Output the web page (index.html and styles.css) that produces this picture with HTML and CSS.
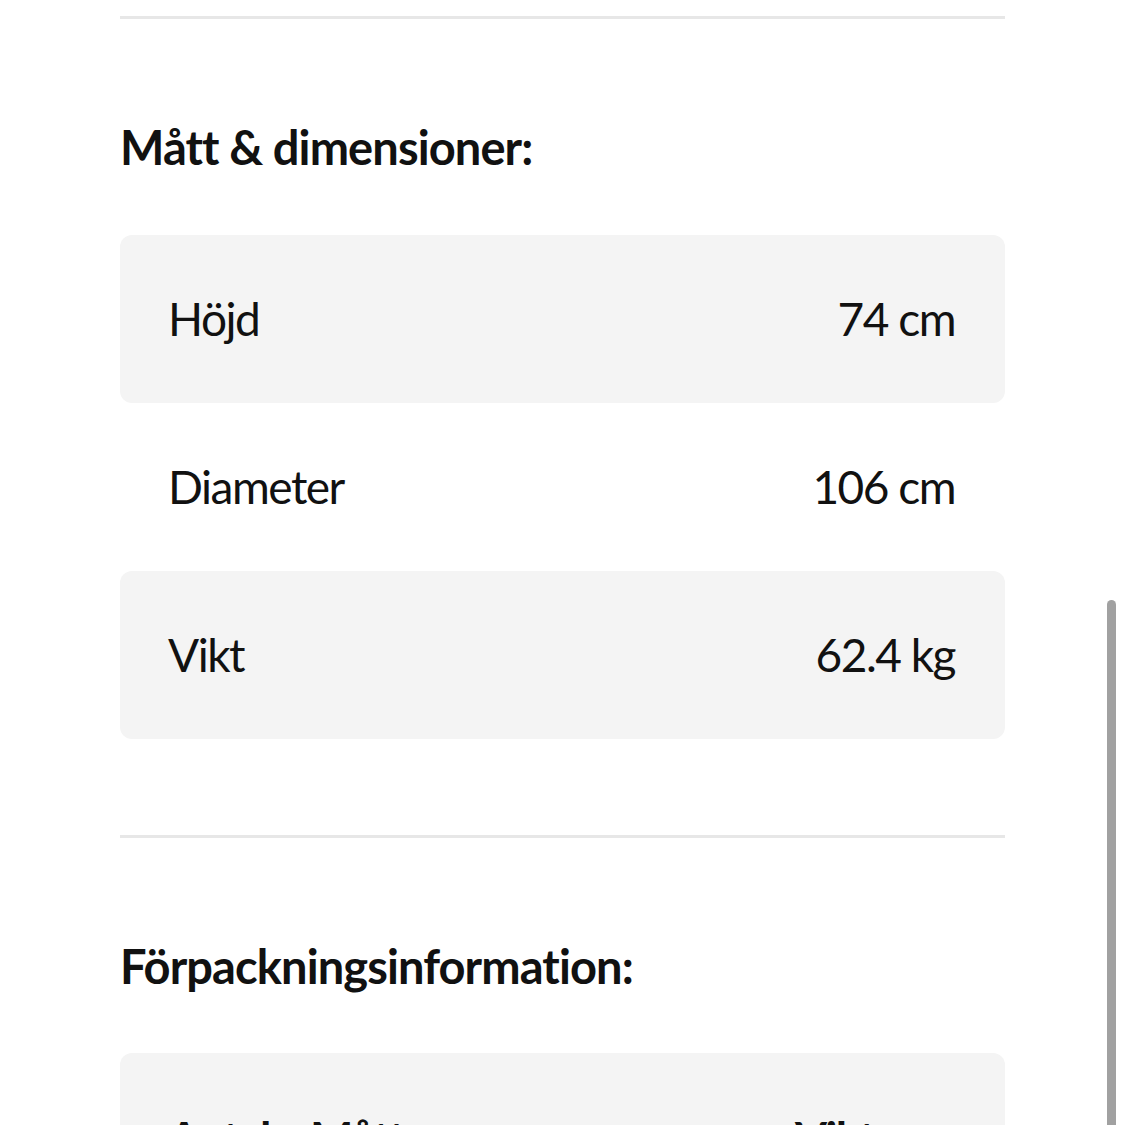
FILE: index.html
```html
<!DOCTYPE html>
<html lang="sv">
<head>
<meta charset="utf-8">
<link rel="stylesheet" href="styles.css">
</head>
<body>
<div class="page">
  <div class="divider"></div>
  <section class="section">
    <h2 class="title">Mått &amp; dimensioner:</h2>
    <div class="table">
      <div class="row shaded"><span class="label">Höjd</span><span class="value">74 cm</span></div>
      <div class="row"><span class="label">Diameter</span><span class="value">106 cm</span></div>
      <div class="row shaded"><span class="label">Vikt</span><span class="value">62.4 kg</span></div>
    </div>
  </section>
  <div class="divider"></div>
  <section class="section">
    <h2 class="title">Förpackningsinformation:</h2>
    <div class="table">
      <div class="row shaded grid3"><span class="head">Antal</span><span class="head">Mått</span><span class="head">Vikt</span></div>
    </div>
  </section>
</div>
<div class="scroll-thumb"></div>
</body>
</html>
```
FILE: styles.css
```css
html, body {
  margin: 0;
  padding: 0;
  background: #ffffff;
  overflow: hidden;
}
body {
  font-family: Lato, "Liberation Sans", sans-serif;
  color: #111111;
  height: 1125px;
}
.page {
  padding: 16px 120px 0 120px;
}
.divider {
  height: 3px;
  background: #e7e7e7;
}
.section {
  padding-top: 100px;
  padding-bottom: 96px;
}
.title {
  margin: 0 0 58px 0;
  font-size: 47px;
  font-weight: 700;
  line-height: 57.6px;
  letter-spacing: -0.9px;
}
.table {
  display: flex;
  flex-direction: column;
}
.row {
  height: 168px;
  box-sizing: border-box;
  padding: 0 50px 0 48px;
  display: flex;
  align-items: center;
  justify-content: space-between;
  font-size: 46px;
  letter-spacing: -1.5px;
  border-radius: 12px;
}
.shaded {
  background: #f4f4f4;
}
.grid3 {
  display: grid;
  grid-template-columns: 142px 485px 1fr;
  align-items: center;
  padding-left: 48px;
}
.head {
  font-weight: 700;
}
.scroll-thumb {
  position: fixed;
  left: 1107px;
  top: 600px;
  width: 9px;
  height: 540px;
  background: #a1a1a1;
  border-radius: 5px 5px 0 0;
}
```
